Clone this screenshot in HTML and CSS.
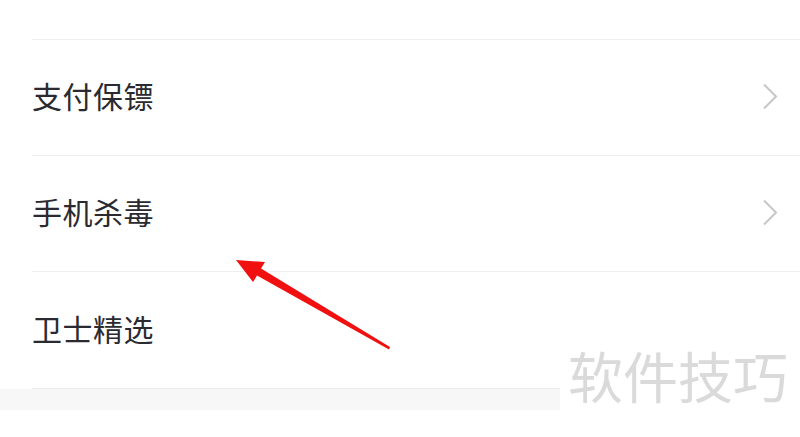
FILE: index.html
```html
<!DOCTYPE html>
<html>
<head>
    <meta charset="utf-8">
    <title>手机卫士</title>
    <link rel="stylesheet" href="styles.css">
</head>
<body>
<div class="page">
    <div class="top-gap"></div>
    <div class="menu">
        <div class="row">
            <span class="label">支付保镖</span>
            <svg class="chevron" width="16" height="28" viewBox="0 0 16 28"><path d="M2 1.5 L14 13.5 L2 25.5" fill="none" stroke="#c6c6c6" stroke-width="2"/></svg>
        </div>
        <div class="row">
            <span class="label">手机杀毒</span>
            <svg class="chevron" width="16" height="28" viewBox="0 0 16 28"><path d="M2 1.5 L14 13.5 L2 25.5" fill="none" stroke="#c6c6c6" stroke-width="2"/></svg>
        </div>
        <div class="row">
            <span class="label">卫士精选</span>
        </div>
    </div>
    <div class="band"></div>

    <div class="watermark">软件技巧</div>

    <svg class="arrow" width="800" height="437" viewBox="0 0 800 437">
        <polygon points="236,260 265,262 261,268.5 390,347 389,349.5 257,275.5 253,282" fill="#f01010"/>
    </svg>
</div>
</body>
</html>
```

FILE: styles.css
```css
body {
    margin: 0;
    background: white;
    font-family: "Noto Sans CJK SC", "Noto Sans", sans-serif;
}
.page {
    position: relative;
    width: 800px;
    height: 437px;
    overflow: hidden;
}
.top-gap {
    height: 39px;
}
.menu {
    padding-left: 32px;
}
.row {
    height: 116px;
    border-top: 1px solid #eeeeee;
    display: flex;
    align-items: center;
    justify-content: space-between;
    padding-right: 22px;
    padding-bottom: 5px;
    box-sizing: border-box;
}
.row:last-child {
    height: 118px;
    border-bottom: 1px solid #ebebeb;
}
.label {
    font-size: 30px;
    color: #2a2a30;
    letter-spacing: 0.5px;
    line-height: 1;
}
.chevron {
    display: block;
    margin-top: 4px;
}
.band {
    height: 21px;
    background: #f7f7f7;
}
.watermark {
    position: absolute;
    left: 560px;
    top: 340px;
    width: 240px;
    height: 70px;
    background: white;
    color: #dadada;
    font-size: 55px;
    line-height: 68px;
    padding-left: 8px;
    box-sizing: border-box;
    white-space: nowrap;
}
.arrow {
    position: absolute;
    left: 0;
    top: 0;
}
```
